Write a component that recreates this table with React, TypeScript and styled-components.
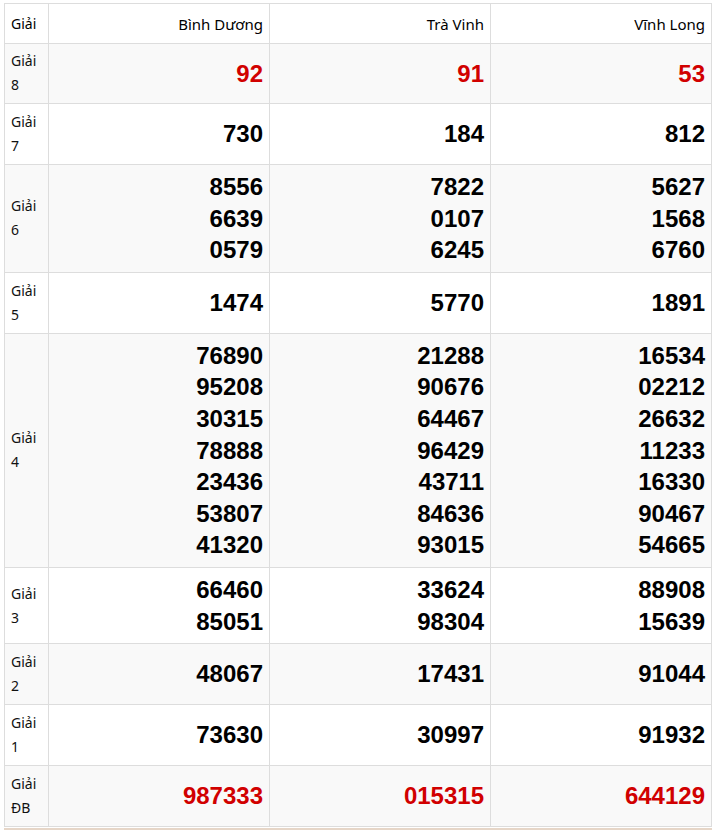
import styled, { createGlobalStyle } from 'styled-components';

type Row = {
  label: string;
  sub: string;
  red?: boolean;
  values: string[][];
};

const rows: Row[] = [
  { label: 'Giải', sub: '8', red: true, values: [['92'], ['91'], ['53']] },
  { label: 'Giải', sub: '7', values: [['730'], ['184'], ['812']] },
  {
    label: 'Giải',
    sub: '6',
    values: [
      ['8556', '6639', '0579'],
      ['7822', '0107', '6245'],
      ['5627', '1568', '6760'],
    ],
  },
  { label: 'Giải', sub: '5', values: [['1474'], ['5770'], ['1891']] },
  {
    label: 'Giải',
    sub: '4',
    values: [
      ['76890', '95208', '30315', '78888', '23436', '53807', '41320'],
      ['21288', '90676', '64467', '96429', '43711', '84636', '93015'],
      ['16534', '02212', '26632', '11233', '16330', '90467', '54665'],
    ],
  },
  {
    label: 'Giải',
    sub: '3',
    values: [
      ['66460', '85051'],
      ['33624', '98304'],
      ['88908', '15639'],
    ],
  },
  { label: 'Giải', sub: '2', values: [['48067'], ['17431'], ['91044']] },
  { label: 'Giải', sub: '1', values: [['73630'], ['30997'], ['91932']] },
  {
    label: 'Giải',
    sub: 'ĐB',
    red: true,
    values: [['987333'], ['015315'], ['644129']],
  },
];

const provinces = ['Bình Dương', 'Trà Vinh', 'Vĩnh Long'];

const GlobalStyle = createGlobalStyle`
  html, body {
    margin: 0;
    padding: 0;
    background: #fff;
  }
  body {
    font-family: 'Noto Sans', 'Open Sans', sans-serif;
    color: #111;
  }
`;

const Page = styled.div`
  padding: 3px 2px 0 4px;
  height: 830px;
  box-sizing: border-box;
  overflow: hidden;
  display: flex;
  flex-direction: column;
`;

const Table = styled.table`
  width: 708px;
  border-collapse: collapse;
  table-layout: fixed;
`;

const HeadCell = styled.th<{ $first?: boolean }>`
  border: 1px solid #dddddd;
  background: #fff;
  height: 39px;
  padding: 0 6px;
  font-size: ${(p) => (p.$first ? '14px' : '15px')};
  font-weight: 400;
  text-align: ${(p) => (p.$first ? 'left' : 'right')};
  color: #000;
`;

const BodyRow = styled.tr<{ $striped: boolean }>`
  background: ${(p) => (p.$striped ? '#f9f9f9' : '#fff')};
`;

const LabelCell = styled.td<{ $tight?: boolean }>`
  border: 1px solid #dddddd;
  padding: ${(p) => (p.$tight ? '5px 6px 6px' : '6px')};
  font-size: 14px;
  line-height: 24px;
  color: #111;
  vertical-align: middle;
`;

const NumberCell = styled.td<{ $red?: boolean }>`
  border: 1px solid #dddddd;
  padding: 6px;
  text-align: right;
  vertical-align: middle;
  font-family: 'Liberation Sans', Arial, sans-serif;
  font-weight: bold;
  font-size: 24px;
  line-height: 31.6px;
  color: ${(p) => (p.$red ? '#d10000' : '#000')};
`;

const Num = styled.div``;

const BottomRule = styled.div`
  margin-top: 1px;
  height: 0;
  border-bottom: 2px solid #e6d6c8;
`;

export default function App() {
  return (
    <>
      <GlobalStyle />
      <Page>
        <Table>
          <colgroup>
            <col style={{ width: 44 }} />
            <col />
            <col />
            <col />
          </colgroup>
          <thead>
            <tr>
              <HeadCell $first>Giải</HeadCell>
              {provinces.map((p) => (
                <HeadCell key={p}>{p}</HeadCell>
              ))}
            </tr>
          </thead>
          <tbody>
            {rows.map((row, i) => (
              <BodyRow key={row.sub} $striped={i % 2 === 0}>
                <LabelCell $tight={i === 0}>
                  {row.label}
                  <br />
                  {row.sub}
                </LabelCell>
                {row.values.map((col, j) => (
                  <NumberCell key={j} $red={row.red}>
                    {col.map((n) => (
                      <Num key={n}>{n}</Num>
                    ))}
                  </NumberCell>
                ))}
              </BodyRow>
            ))}
          </tbody>
        </Table>
        <BottomRule />
      </Page>
    </>
  );
}
